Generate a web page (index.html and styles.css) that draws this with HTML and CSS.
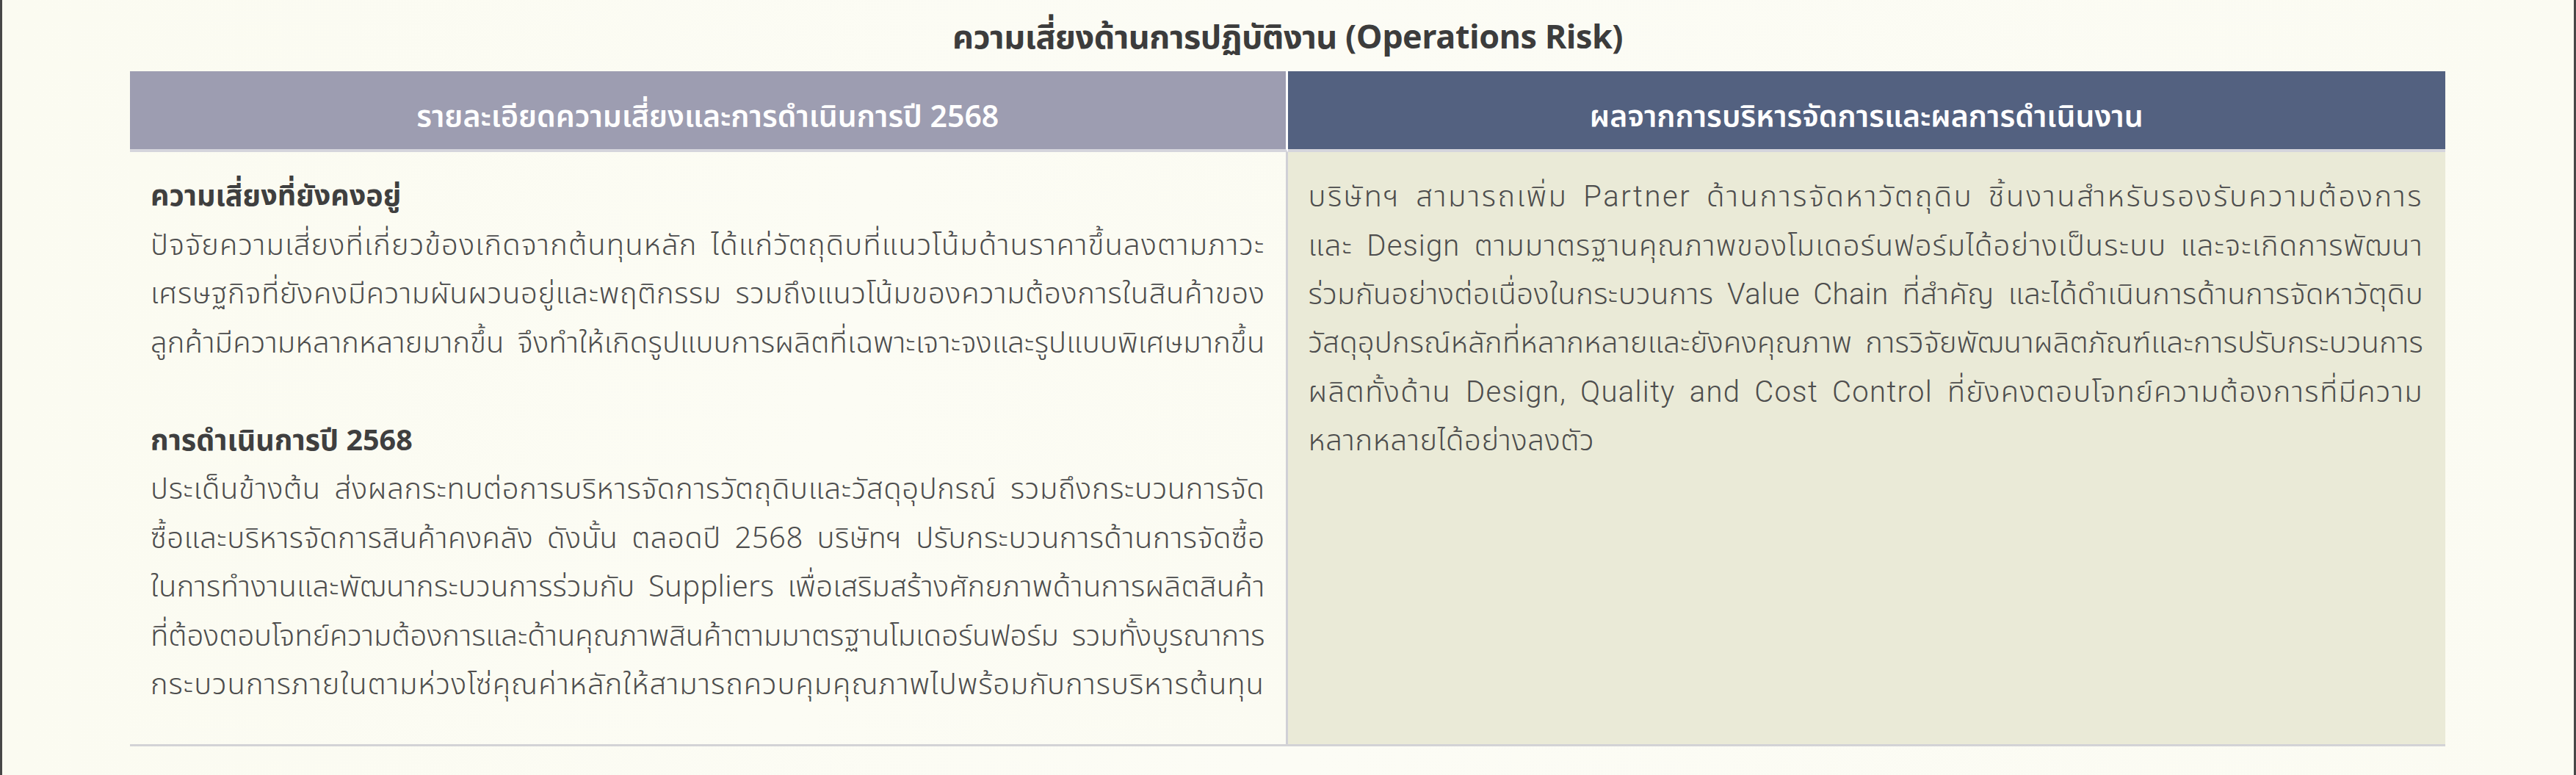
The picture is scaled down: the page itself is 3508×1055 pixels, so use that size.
FILE: index.html
```html
<!DOCTYPE html>
<html lang="th">
<head>
<meta charset="utf-8">
<title>ความเสี่ยงด้านการปฏิบัติงาน</title>
<link rel="stylesheet" href="styles.css">
</head>
<body>
<div class="page">
  <h1 class="title">ความเสี่ยงด้านการปฏิบัติงาน (Operations Risk)</h1>
  <div class="table">
    <div class="head head-left">รายละเอียดความเสี่ยงและการดำเนินการปี 2568</div>
    <div class="head head-right">ผลจากการบริหารจัดการและผลการดำเนินงาน</div>
    <div class="cell cell-left">
      <div class="line sub">ความเสี่ยงที่ยังคงอยู่</div>
      <div class="line j"><span class="t">ปัจจัยความเสี่ยงที่เกี่ยวข้องเกิดจากต้นทุนหลัก ได้แก่วัตถุดิบที่แนวโน้มด้านราคาขึ้นลงตามภาวะ</span></div>
      <div class="line j"><span class="t">เศรษฐกิจที่ยังคงมีความผันผวนอยู่และพฤติกรรม รวมถึงแนวโน้มของความต้องการในสินค้าของ</span></div>
      <div class="line j"><span class="t">ลูกค้ามีความหลากหลายมากขึ้น จึงทำให้เกิดรูปแบบการผลิตที่เฉพาะเจาะจงและรูปแบบพิเศษมากขึ้น</span></div>
      <div class="line blank"></div>
      <div class="line sub">การดำเนินการปี 2568</div>
      <div class="line j"><span class="t">ประเด็นข้างต้น ส่งผลกระทบต่อการบริหารจัดการวัตถุดิบและวัสดุอุปกรณ์ รวมถึงกระบวนการจัด</span></div>
      <div class="line j"><span class="t">ซื้อและบริหารจัดการสินค้าคงคลัง ดังนั้น ตลอดปี 2568 บริษัทฯ ปรับกระบวนการด้านการจัดซื้อ</span></div>
      <div class="line j"><span class="t">ในการทำงานและพัฒนากระบวนการร่วมกับ Suppliers เพื่อเสริมสร้างศักยภาพด้านการผลิตสินค้า</span></div>
      <div class="line j"><span class="t">ที่ต้องตอบโจทย์ความต้องการและด้านคุณภาพสินค้าตามมาตรฐานโมเดอร์นฟอร์ม รวมทั้งบูรณาการ</span></div>
      <div class="line j"><span class="t">กระบวนการภายในตามห่วงโซ่คุณค่าหลักให้สามารถควบคุมคุณภาพไปพร้อมกับการบริหารต้นทุน</span></div>
    </div>
    <div class="cell cell-right">
      <div class="line j"><span class="t">บริษัทฯ สามารถเพิ่ม <span class="en">Partner</span> ด้านการจัดหาวัตถุดิบ ชิ้นงานสำหรับรองรับความต้องการ</span></div>
      <div class="line j"><span class="t">และ <span class="en">Design</span> ตามมาตรฐานคุณภาพของโมเดอร์นฟอร์มได้อย่างเป็นระบบ และจะเกิดการพัฒนา</span></div>
      <div class="line j"><span class="t">ร่วมกันอย่างต่อเนื่องในกระบวนการ <span class="en">Value Chain</span> ที่สำคัญ และได้ดำเนินการด้านการจัดหาวัตุดิบ</span></div>
      <div class="line j"><span class="t">วัสดุอุปกรณ์หลักที่หลากหลายและยังคงคุณภาพ การวิจัยพัฒนาผลิตภัณฑ์และการปรับกระบวนการ</span></div>
      <div class="line j"><span class="t">ผลิตทั้งด้าน <span class="en">Design, Quality and Cost Control</span> ที่ยังคงตอบโจทย์ความต้องการที่มีความ</span></div>
      <div class="line last">หลากหลายได้อย่างลงตัว</div>
    </div>
  </div>
</div>
<script src="script.js"></script>
</body>
</html>
```
FILE: styles.css
```css
html, body {
  margin: 0;
  padding: 0;
}
body {
  background: #fbfbf2;
  font-family: "Noto Sans Thai", "Noto Sans", "Liberation Sans", sans-serif;
  color: #4b4b4b;
}
.page {
  box-sizing: border-box;
  width: 3508px;
  height: 1055px;
  border-left: 3px solid #474747;
  border-right: 3px solid #474747;
  background: linear-gradient(90deg, #fbfbf1 0%, #fcfcf5 50%, #fbfbf2 100%);
  padding: 0 175px 0 174px;
}
.title {
  box-sizing: border-box;
  margin: 0;
  height: 97px;
  padding-top: 6px;
  display: flex;
  align-items: center;
  justify-content: center;
  font-size: 45px;
  font-weight: 700;
  color: #3c3c3c;
  letter-spacing: -0.5px;
}
.table {
  display: grid;
  grid-template-columns: 1fr 1fr;
  border-bottom: 3px solid #d3d3d6;
}
.head {
  box-sizing: border-box;
  height: 110px;
  padding-top: 20px;
  border-bottom: 4px solid #d5d5dc;
  display: flex;
  align-items: center;
  justify-content: center;
  color: #ffffff;
  font-size: 41px;
  font-weight: 600;
}
.head-left {
  background: #9d9db1;
  border-right: 3px solid #ffffff;
}
.head-right {
  background: #536180;
}
.cell {
  padding: 28px 28px 46px 28px;
}
.cell-left {
  border-right: 3px solid #d0d0d6;
  background: linear-gradient(100deg, #fbfbf1 0%, #fcfcf4 60%, #fbfbf2 100%);
}
.cell-right {
  background: #eaead7;
  padding-right: 30px;
}
.line {
  font-size: 40px;
  font-weight: 300;
  line-height: 66.5px;
  height: 66.5px;
  white-space: nowrap;
  color: #4d4d4d;
}
.j {
  text-align: justify;
  text-align-last: justify;
}
.last {
  letter-spacing: 0.6px;
}
.sub {
  font-size: 39.5px;
  font-weight: 700;
  color: #3f3f3f;
}
.en {
  font-family: Roboto, "Liberation Sans", sans-serif;
  font-weight: 300;
}
```
FILE: script.js
```js
(function () {
  var EXTRA_GAP = 8;

  function fitLine(line) {
    var span = line.querySelector('.t');
    if (!span) return;
    line.classList.remove('j');
    span.style.letterSpacing = '0px';
    var avail = line.clientWidth;
    var spaces = (span.textContent.match(/ /g) || []).length;
    var target = avail - EXTRA_GAP * spaces;
    if (spaces === 0) target = avail - 1;
    var w0 = span.getBoundingClientRect().width;
    span.style.letterSpacing = '1px';
    var w1 = span.getBoundingClientRect().width;
    var units = w1 - w0;
    if (units <= 0) units = span.textContent.length;
    var ls = (target - w0) / units;
    span.style.letterSpacing = ls + 'px';
    var w2 = span.getBoundingClientRect().width;
    ls += (target - w2) / units;
    span.style.letterSpacing = ls + 'px';
    line.classList.add('j');
  }

  function fitAll() {
    var lines = document.querySelectorAll('.line.j');
    for (var i = 0; i < lines.length; i++) fitLine(lines[i]);
  }

  fitAll();
  if (document.fonts && document.fonts.ready) {
    document.fonts.ready.then(fitAll);
  }
})();
```
